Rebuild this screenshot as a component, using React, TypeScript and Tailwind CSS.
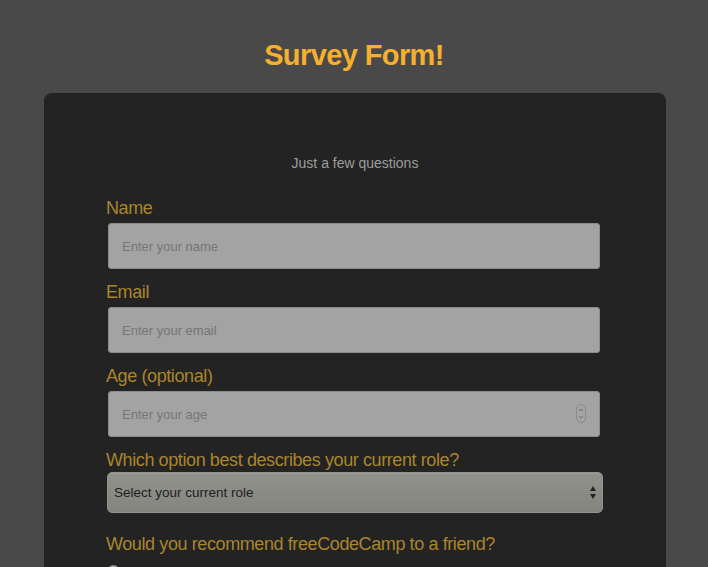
import React from 'react';

const font = { fontFamily: '"Liberation Sans", Arial, sans-serif' };

function Field({ label, children }: { label: string; children: React.ReactNode }) {
  return (
    <div className="mb-[12px]">
      <label className="block text-[18px] leading-[22px] tracking-[-0.4px] text-[#a9852e]">{label}</label>
      {children}
    </div>
  );
}

function TextInput({ placeholder }: { placeholder: string }) {
  return (
    <input
      type="text"
      placeholder={placeholder}
      className="mt-[4px] ml-[2px] block h-[46px] w-[492px] rounded-[3px] border border-[#8c8c8c] bg-[#a3a3a3] px-[13px] text-[13px] text-[#222] outline-none placeholder:text-[#767676]"
    />
  );
}

export default function App() {
  const options = ['Definitely', 'Maybe', 'Not sure'];

  return (
    <div className="min-h-screen bg-[#494949] pb-10" style={font}>
      <h1 className="pt-[37px] text-center text-[29px] font-bold leading-[36px] tracking-[-0.6px] text-[#f6b02d]">
        Survey Form!
      </h1>

      <div className="ml-[44px] mt-[20px] w-[622px] rounded-lg bg-[#232323] pt-[60px] pb-10">
        <p className="text-center text-[14px] leading-[20px] text-[#9d9d9d]">Just a few questions</p>

        <form className="ml-[62px] mt-[24px] w-[496px]">
          <Field label="Name">
            <TextInput placeholder="Enter your name" />
          </Field>

          <Field label="Email">
            <TextInput placeholder="Enter your email" />
          </Field>

          <Field label="Age (optional)">
            <div className="relative">
              <TextInput placeholder="Enter your age" />
              {/* number spinner */}
              <svg className="absolute right-[16px] top-[13px]" width="10" height="19" viewBox="0 0 10 19">
                <rect x="0.5" y="0.5" width="9" height="18" rx="4.5" fill="none" stroke="#8a8a8a" />
                <path d="M3 7 L5 5 L7 7" fill="none" stroke="#6f6f6f" strokeWidth="1" />
                <path d="M3 12 L5 14 L7 12" fill="none" stroke="#6f6f6f" strokeWidth="1" />
              </svg>
            </div>
          </Field>

          <div className="mb-[20px]">
            <label className="block text-[18px] leading-[22px] tracking-[-0.4px] text-[#a9852e]">
              Which option best describes your current role?
            </label>
            <div className="relative mt-[1px] ml-[1px]">
              <select
                defaultValue=""
                className="block h-[41px] w-[496px] appearance-none rounded-[5px] border border-[#94948e] bg-gradient-to-b from-[#92928c] via-[#8b8b85] to-[#85857f] px-[6px] pt-[2px] text-[13.5px] text-[#1e1e1e] shadow-[inset_0_1px_0_rgba(255,255,255,0.12)] outline-none"
                style={font}
              >
                <option value="" disabled>
                  Select your current role
                </option>
                <option>Student</option>
                <option>Full Time Job</option>
                <option>Full Time Learner</option>
                <option>Prefer not to say</option>
                <option>Other</option>
              </select>
              <svg className="pointer-events-none absolute right-[6px] top-[14px]" width="6" height="13" viewBox="0 0 6 13">
                <path d="M3 0 L6 5 L0 5 Z" fill="#222" />
                <path d="M0 8 L6 8 L3 13 Z" fill="#222" />
              </svg>
            </div>
          </div>

          <div>
            <label className="block text-[18px] leading-[22px] tracking-[-0.4px] text-[#a9852e]">
              Would you recommend freeCodeCamp to a friend?
            </label>
            <div className="mt-[10px] flex flex-col gap-2">
              {options.map((o) => (
                <label key={o} className="flex items-start gap-2 text-[15px] leading-[20px] text-[#a9852e]">
                  <span className="ml-[1px] h-[13px] w-[13px] shrink-0 rounded-full border border-[#8a8a8a] bg-[#a3a3a3]" />
                  <span className="mt-[4px]">{o}</span>
                </label>
              ))}
            </div>
          </div>
        </form>
      </div>
    </div>
  );
}
